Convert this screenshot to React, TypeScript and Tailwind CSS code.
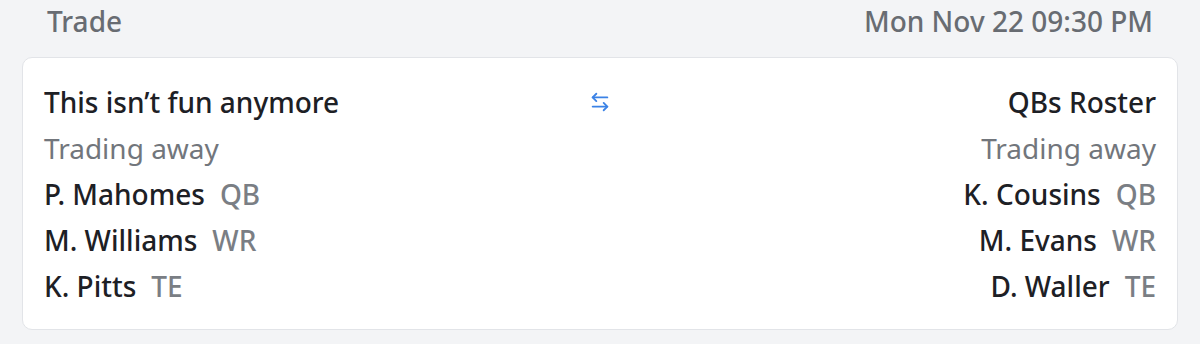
import { ArrowLeftRight } from "lucide-react";

type Player = { name: string; pos: string };

const left: Player[] = [
  { name: "P. Mahomes", pos: "QB" },
  { name: "M. Williams", pos: "WR" },
  { name: "K. Pitts", pos: "TE" },
];

const right: Player[] = [
  { name: "K. Cousins", pos: "QB" },
  { name: "M. Evans", pos: "WR" },
  { name: "D. Waller", pos: "TE" },
];

const Side = ({ team, players, align }: { team: string; players: Player[]; align: "left" | "right" }) => (
  <div className={align === "left" ? "flex flex-col items-start" : "flex flex-col items-end"}>
    <div className="font-medium text-[#1d2025]">{team}</div>
    <div className="text-[#72767c]">Trading away</div>
    {players.map((p) => (
      <div key={p.name} className="flex">
        <span className="font-medium text-[#1d2025]">{p.name}</span>
        <span className="ml-[15px] font-medium text-[#7a7e84]">{p.pos}</span>
      </div>
    ))}
  </div>
);

export default function App() {
  return (
    <div
      className="w-[1200px] h-[344px] bg-[#f3f4f6] px-[22px] text-[28px]"
      style={{ fontFamily: '"Noto Sans", "Open Sans", sans-serif' }}
    >
      <div className="flex justify-between pt-[3px] px-[25px] leading-[36px] font-medium text-[#686c72] mb-[18px]">
        <span>Trade</span>
        <span>Mon Nov 22 09:30 PM</span>
      </div>
      <div className="grid grid-cols-[1fr_auto_1fr] bg-white border border-[#e2e4e8] rounded-[10px] px-[21px] pt-[21px] pb-[20px] leading-[46px]">
        <Side team="This isn’t fun anymore" players={left} align="left" />
        <div className="flex justify-center pt-[12px]">
          <ArrowLeftRight className="w-[22px] h-[22px] text-[#3b82e6]" strokeWidth={2} />
        </div>
        <Side team="QBs Roster" players={right} align="right" />
      </div>
    </div>
  );
}
